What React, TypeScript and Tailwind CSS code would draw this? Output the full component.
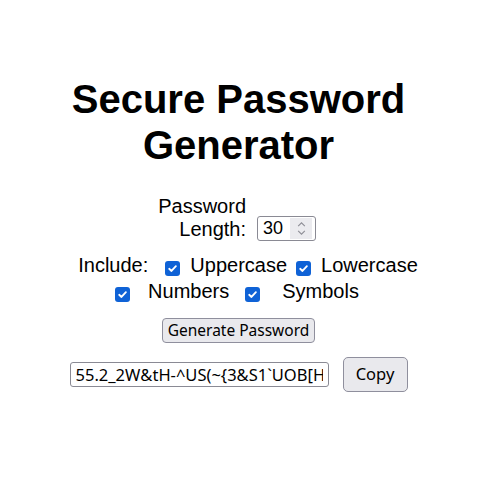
import React, { useState } from 'react';

const CheckMark = () => (
  <span className="mt-[6px] inline-flex h-[15px] w-[15px] shrink-0 items-center justify-center rounded-[3px] bg-[#0f62d6]">
    <svg viewBox="0 0 12 12" className="h-[11px] w-[11px]">
      <path
        d="M2.4 6.3 4.9 8.7 9.7 3.5"
        fill="none"
        stroke="white"
        strokeWidth="2"
        strokeLinecap="round"
        strokeLinejoin="round"
      />
    </svg>
  </span>
);

export default function App() {
  const [length] = useState('30');
  const [password] = useState('55.2_2W&tH-^US(~{3&S1`UOB[Hq7!');

  return (
    <div className="min-h-screen bg-white font-['Liberation_Sans',Arial,sans-serif] text-black">
      <div className="flex w-[477px] flex-col items-center pt-[76px]">
        {/* Title */}
        <h1 className="m-0 w-[360px] text-center text-[40px] font-bold leading-[46px]">
          Secure Password Generator
        </h1>

        {/* Length */}
        <div className="mt-[27px] mr-[4px] flex items-end gap-[11px]">
          <label className="w-[89px] text-right text-[20px] leading-[23px]">Password Length:</label>
          <div className="flex h-[25px] w-[59px] items-center rounded-[3px] border border-[#8a8a94] pl-[5px] pr-[3px]">
            <input
              className="w-full min-w-0 bg-transparent text-[18px] leading-none outline-none"
              value={length}
              readOnly
            />
            <span className="flex h-[21px] w-[22px] shrink-0 flex-col items-center justify-center gap-[3px] bg-[#ebebef]">
              <svg viewBox="0 0 10 6" className="h-[5px] w-[9px]">
                <path d="M1 5 5 1 9 5" fill="none" stroke="#8d8d96" strokeWidth="1.3" />
              </svg>
              <svg viewBox="0 0 10 6" className="h-[5px] w-[9px]">
                <path d="M1 1 5 5 9 1" fill="none" stroke="#8d8d96" strokeWidth="1.3" />
              </svg>
            </span>
          </div>
        </div>

        {/* Options */}
        <div className="mt-[11px] ml-[19px] flex h-[26px] items-center text-[20px] leading-[23px]">
          <span>Include:</span>
          <span className="ml-[17px] flex"><CheckMark /></span>
          <span className="ml-[10px]">Uppercase</span>
          <span className="ml-[9px] flex"><CheckMark /></span>
          <span className="ml-[10px]">Lowercase</span>
        </div>
        <div className="mr-[3px] flex h-[26px] items-center text-[20px] leading-[23px]">
          <CheckMark />
          <span className="ml-[18px]">Numbers</span>
          <span className="ml-[16px] flex"><CheckMark /></span>
          <span className="ml-[22px]">Symbols</span>
        </div>

        {/* Generate */}
        <button className="mt-[14px] flex h-[25px] w-[153px] items-center justify-center rounded-[4px] border border-[#8f8f9d] bg-[#e9e9ed] font-['Noto_Sans',sans-serif] text-[15.5px]">
          Generate Password
        </button>

        {/* Result */}
        <div className="mt-[14px] flex items-center gap-[14px]">
          <input
            className="h-[25px] w-[259px] rounded-[3px] border border-[#8a8a94] px-[5px] font-['Noto_Sans',sans-serif] text-[16.5px] outline-none"
            value={password}
            readOnly
          />
          <button className="flex h-[35px] w-[65px] items-center justify-center rounded-[5px] border border-[#8f8f9d] bg-[#e9e9ed] font-['Noto_Sans',sans-serif] text-[16.5px]">
            Copy
          </button>
        </div>
      </div>
    </div>
  );
}
